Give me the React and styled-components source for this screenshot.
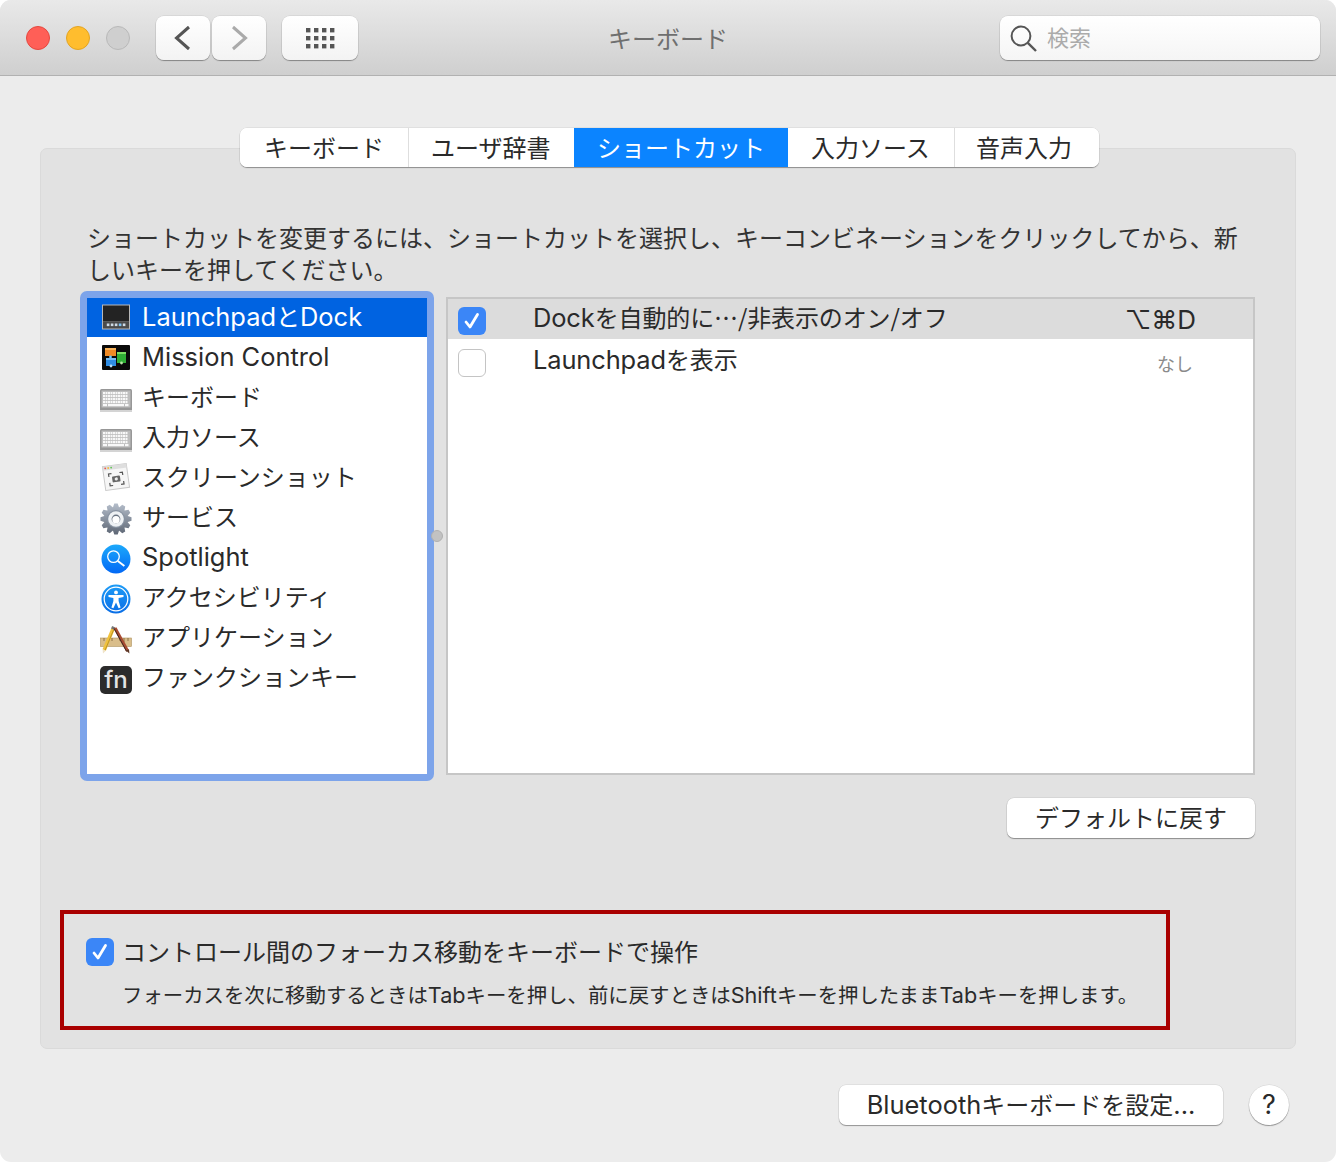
import React from "react";
import styled, { createGlobalStyle } from "styled-components";

const GlobalStyle = createGlobalStyle`
  html, body {
    margin: 0;
    padding: 0;
    background: #fff;
  }
  * {
    box-sizing: border-box;
  }
`;

const fontStack = `"Noto Sans CJK JP", "Noto Sans", sans-serif`;
const softShadow = `0 1px 1px rgba(0, 0, 0, 0.34), 0 0 0 0.5px rgba(0, 0, 0, 0.1)`;

const Window = styled.div`
  width: 1336px;
  height: 1162px;
  background: #ececec;
  border-radius: 11px;
  overflow: hidden;
  font-family: ${fontStack};
  color: #2a2a2a;
`;

const Latin = styled.span`
  font-family: Inter, "Liberation Sans", sans-serif;
  font-size: 1.06em;
`;

const Toolbar = styled.div`
  height: 76px;
  display: grid;
  grid-template-columns: 1fr auto 1fr;
  align-items: center;
  padding: 0 16px;
  background: linear-gradient(to bottom, #e9e9e9, #cfcfcf);
  border-bottom: 1px solid #b1b1b1;
`;

const ToolbarLeft = styled.div`
  display: flex;
  align-items: center;
  padding-left: 10px;
`;

const TrafficLights = styled.div`
  display: flex;
  gap: 16px;
  margin-right: 26px;
`;

const Light = styled.span`
  width: 24px;
  height: 24px;
  border-radius: 50%;
  background: ${(p) => p.$color};
  border: 1px solid ${(p) => p.$edge};
`;

const ToolButton = styled.button`
  height: 44px;
  width: ${(p) => p.$width}px;
  margin-right: ${(p) => p.$gap}px;
  padding: 0;
  display: flex;
  align-items: center;
  justify-content: center;
  border: none;
  border-radius: 8px;
  background: linear-gradient(to bottom, #ffffff, #f3f3f3);
  box-shadow: ${softShadow};
`;

const WindowTitle = styled.div`
  font-size: 24px;
  line-height: 32px;
  color: #6f6f6f;
`;

const SearchBox = styled.div`
  justify-self: end;
  width: 320px;
  height: 44px;
  display: flex;
  align-items: center;
  gap: 9px;
  padding: 0 0 3px 10px;
  border-radius: 8px;
  background: linear-gradient(to bottom, #ffffff, #f5f5f5);
  box-shadow: ${softShadow};
  color: #ababab;
  font-size: 22px;
  line-height: 30px;
`;

const SearchGlyph = styled.span`
  display: flex;
  padding-top: 5px;
`;

const Content = styled.div`
  padding: 72px 40px 0;
`;

const Panel = styled.div`
  height: 901px;
  padding: 0 40px;
  background: #e2e2e2;
  border: 1px solid #dadada;
  border-radius: 7px;
`;

const Tabs = styled.div`
  width: 859px;
  height: 39px;
  margin: -21px 0 0 159px;
  display: flex;
  background: #fff;
  border-radius: 7px;
  overflow: hidden;
  box-shadow: ${softShadow};
`;

const Tab = styled.div`
  width: ${(p) => p.$width}px;
  padding-left: ${(p) => p.$pad}px;
  font-size: 24px;
  line-height: 38px;
  white-space: nowrap;
  color: ${(p) => (p.$active ? "#fff" : "#2a2a2a")};
  background: ${(p) => (p.$active ? "#0b84ff" : "#fff")};
  border-right: 1px solid ${(p) => (p.$divider ? "#dedede" : "transparent")};
`;

const Instructions = styled.p`
  margin: 54px 0 6px 6px;
  width: 1160px;
  font-size: 24px;
  line-height: 32px;
  color: #333;
`;

const Split = styled.div`
  display: flex;
  height: 490px;
  margin-left: -1px;
`;

const ListFrame = styled.div`
  width: 354px;
  height: 100%;
  border: 7px solid #7da4ea;
  border-radius: 7px;
  background: #fff;
`;

const ListRow = styled.div`
  height: ${(p) => (p.$selected ? "39px" : "40px")};
  margin-bottom: ${(p) => (p.$selected ? "1px" : "0")};
  display: flex;
  align-items: center;
  padding-left: 13px;
  gap: 10px;
  background: ${(p) => (p.$selected ? "#0063e1" : "transparent")};
  color: ${(p) => (p.$selected ? "#fff" : "#2a2a2a")};
  font-size: 24px;
  line-height: 32px;
  padding-bottom: ${(p) => (p.$selected ? "3px" : "4px")};
`;

const IconSlot = styled.span`
  width: 32px;
  height: 32px;
  padding-top: 2px;
  flex: none;
  display: flex;
  align-items: center;
  justify-content: center;
`;

const FnKey = styled.span`
  width: 32px;
  height: 28px;
  margin-top: 5px;
  border-radius: 5px;
  background: #2b2b2b;
  color: #e4e4e4;
  font-family: Inter, sans-serif;
  font-size: 24px;
  font-weight: 500;
  line-height: 27px;
  text-align: center;
`;

const Divider = styled.div`
  width: 12px;
  flex: none;
  display: flex;
  align-items: center;
`;

const DividerDot = styled.span`
  width: 12px;
  height: 12px;
  margin-left: -3px;
  flex: none;
  border-radius: 50%;
  background: #c2c2c2;
  border: 1px solid #b0b0b0;
`;

const Table = styled.div`
  flex: 1;
  margin: 6px 0;
  background: #fff;
  border: 2px solid #c6c6c6;
`;

const TableRow = styled.div`
  height: ${(p) => (p.$selected ? "40px" : "42px")};
  display: flex;
  align-items: flex-start;
  padding: ${(p) => (p.$selected ? "8px" : "10px")} 57px 0 10px;
  background: ${(p) => (p.$selected ? "#dcdcdc" : "#fff")};
`;

const CheckBox = styled.span`
  width: 28px;
  height: 28px;
  flex: none;
  display: flex;
  align-items: center;
  justify-content: center;
  border-radius: 6px;
  background: ${(p) => (p.$checked ? "#3b86f7" : "#fff")};
  border: ${(p) => (p.$checked ? "none" : "1px solid #c4c4c4")};
`;

const RowLabel = styled.span`
  margin: -6px 0 0 47px;
  font-size: 24px;
  line-height: 32px;
  letter-spacing: -0.12px;
  color: #2a2a2a;
`;

const KeyCombo = styled.span`
  margin: -3px 0 0 auto;
  font-family: Inter, "DejaVu Sans", sans-serif;
  font-size: 26px;
  line-height: 32px;
  color: #2a2a2a;
`;

const NoKey = styled.span`
  margin: 2px 3px 0 auto;
  font-size: 18px;
  line-height: 24px;
  color: #8a8a8a;
`;

const ButtonRow = styled.div`
  display: flex;
  justify-content: flex-end;
  margin-top: 17px;
`;

const PushButton = styled.button`
  height: 40px;
  width: ${(p) => p.$width}px;
  padding: 0 0 2px;
  border: none;
  border-radius: 7px;
  background: #fff;
  font-family: ${fontStack};
  font-size: 24px;
  line-height: 36px;
  color: #2a2a2a;
  box-shadow: ${softShadow};
`;

const FocusBox = styled.div`
  width: 1110px;
  height: 120px;
  margin: 72px 0 0 -21px;
  padding: 24px 0 0 22px;
  border: 4px solid #a90000;
`;

const FocusOption = styled.div`
  display: flex;
  align-items: center;
  gap: 8px;
  font-size: 24px;
  line-height: 28px;
  color: #2a2a2a;
`;

const FocusText = styled.span`
  margin-top: -2px;
`;

const FocusHint = styled.div`
  margin: 13px 0 0 36px;
  font-size: 20.4px;
  line-height: 30px;
  white-space: nowrap;
  color: #2a2a2a;
`;

const Footer = styled.div`
  display: flex;
  justify-content: flex-end;
  align-items: center;
  gap: 26px;
  margin-top: 36px;
  padding-right: 7px;
`;

const HelpButton = styled.button`
  width: 40px;
  height: 40px;
  padding: 0 0 2px;
  border: none;
  border-radius: 50%;
  background: #fff;
  font-family: Inter, sans-serif;
  font-size: 27px;
  color: #2a2a2a;
  box-shadow: ${softShadow};
`;

const Chevron = ({ d, color }) => (
  <svg width="20" height="28" viewBox="0 0 20 28">
    <polyline points={d} fill="none" stroke={color} strokeWidth="3" />
  </svg>
);

const GridIcon = () => (
  <svg width="30" height="22" viewBox="0 0 30 22">
    {[0, 8, 16].map((y) =>
      [0, 8, 16, 24].map((x) => (
        <rect key={`${x}-${y}`} x={x + 1} y={y + 1} width="4.4" height="4.4" fill="#555" />
      ))
    )}
  </svg>
);

const SearchIcon = () => (
  <svg width="28" height="28" viewBox="0 0 28 28">
    <circle cx="11" cy="11" r="9.4" fill="none" stroke="#555" strokeWidth="2" />
    <line x1="17.8" y1="17.8" x2="26" y2="26" stroke="#555" strokeWidth="2.4" />
  </svg>
);

const CheckMark = () => (
  <svg width="20" height="20" viewBox="0 0 20 20">
    <polyline points="4,11 8,16 15.5,3.5" fill="none" stroke="#fff" strokeWidth="2.8" strokeLinecap="round" strokeLinejoin="round" />
  </svg>
);

const DockIcon = () => (
  <svg width="30" height="26" viewBox="0 0 30 26">
    <rect x="1" y="0.5" width="28" height="25" fill="#b8b8b8" />
    <rect x="2" y="1.5" width="26" height="16" fill="#232323" />
    <rect x="2" y="17.5" width="26" height="7" fill="#4b4b4b" />
    {[7, 11, 15, 19, 23].map((x) => (
      <rect key={x} x={x - 1.2} y="19.5" width="2.6" height="2.6" fill={x === 19 ? "#7fc4f5" : "#cfdbe6"} />
    ))}
  </svg>
);

const MissionIcon = () => (
  <svg width="28" height="25" viewBox="0 0 28 25">
    <rect width="28" height="25" rx="1" fill="#0a0a0a" />
    <rect x="3" y="3" width="11" height="8" fill="#f08a24" />
    <rect x="3" y="3" width="11" height="2" fill="#f9b45c" />
    <rect x="4" y="13" width="10" height="8" fill="#2f8de4" />
    <rect x="4" y="13" width="10" height="2" fill="#78bdf3" />
    <rect x="15" y="7" width="9" height="11" fill="#2fae35" />
    <rect x="15" y="7" width="9" height="2" fill="#7ddc63" />
    <circle cx="8.5" cy="12" r="1.4" fill="#6fc4f5" />
    <circle cx="19.5" cy="18" r="1.4" fill="#b7e8a5" />
    <circle cx="9" cy="21" r="1.4" fill="#b5ddf7" />
  </svg>
);

const KEY_COLUMNS = [3, 5.5, 8, 10.5, 13, 15.5, 18, 20.5, 23, 25.5];

const KeyboardIcon = () => (
  <svg width="32" height="24" viewBox="0 0 32 24" style={{ marginTop: 7 }}>
    <rect x="0" y="0" width="32" height="22" rx="1.5" fill="#979797" />
    <rect x="0" y="21" width="32" height="2" fill="#d4d4d4" />
    <rect x="1.5" y="1.5" width="29" height="17" fill="#bdbdbd" />
    {[3, 6, 9, 12].map((y) =>
      KEY_COLUMNS.map((x) => <rect key={`${x}-${y}`} x={x} y={y} width="2" height="2.2" fill="#f8f8f8" />)
    )}
    <rect x="8" y="15" width="16" height="2.2" fill="#f8f8f8" />
    <rect x="3" y="15" width="4" height="2.2" fill="#f8f8f8" />
    <rect x="25" y="15" width="3.5" height="2.2" fill="#f8f8f8" />
  </svg>
);

const ScreenshotIcon = () => (
  <svg width="30" height="30" viewBox="0 0 30 30">
    <g transform="rotate(-8 15 15)">
      <rect x="3" y="3" width="24" height="24" fill="#f6f6f6" stroke="#c9c9c9" />
      <rect x="3" y="3" width="24" height="4" fill="#dedede" />
      <circle cx="5.5" cy="5" r="0.9" fill="#e8594f" />
      <circle cx="8.5" cy="5" r="0.9" fill="#f3bb3b" />
      <circle cx="11.5" cy="5" r="0.9" fill="#5fc454" />
      <path d="M8 14v-3h3M19 11h3v3M22 20v3h-3M11 23H8v-3" fill="none" stroke="#555" strokeWidth="1.2" />
      <rect x="11" y="14" width="8" height="6" rx="1" fill="#666" />
      <circle cx="15" cy="17" r="1.6" fill="#eee" />
    </g>
  </svg>
);

const gearPath = () => {
  const teeth = 12;
  const pts = [];
  for (let i = 0; i < teeth; i++) {
    const a = (i / teeth) * Math.PI * 2;
    const w = Math.PI / teeth;
    [
      [12.2, a - w * 0.95],
      [15.6, a - w * 0.42],
      [15.6, a + w * 0.42],
      [12.2, a + w * 0.95],
    ].forEach(([r, t]) => pts.push(`${(16 + r * Math.cos(t)).toFixed(2)},${(16 + r * Math.sin(t)).toFixed(2)}`));
  }
  return pts.join(" ");
};

const GearIcon = () => (
  <svg width="32" height="32" viewBox="0 0 32 32" style={{ marginTop: 3 }}>
    <defs>
      <linearGradient id="gearFill" x1="0" y1="0" x2="0" y2="1">
        <stop offset="0" stopColor="#b4bdca" />
        <stop offset="1" stopColor="#5e6775" />
      </linearGradient>
    </defs>
    <polygon points={gearPath()} fill="url(#gearFill)" />
    <circle cx="16" cy="16" r="9" fill="#8792a1" />
    <circle cx="16" cy="16" r="7.8" fill="#eef1f4" />
    <circle cx="16" cy="16" r="4.4" fill="#6a7482" />
    <circle cx="16" cy="16.8" r="3.7" fill="#fff" />
  </svg>
);

const SpotlightIcon = () => (
  <svg width="30" height="30" viewBox="0 0 30 30" style={{ marginTop: 3 }}>
    <defs>
      <linearGradient id="spotFill" x1="0" y1="0" x2="0" y2="1">
        <stop offset="0" stopColor="#1ca9fb" />
        <stop offset="1" stopColor="#0268f5" />
      </linearGradient>
    </defs>
    <circle cx="15" cy="15" r="14.5" fill="url(#spotFill)" />
    <circle cx="12.5" cy="12.6" r="5.8" fill="none" stroke="#fff" strokeWidth="1.3" />
    <line x1="16.8" y1="17" x2="23.4" y2="22" stroke="#fff" strokeWidth="1.9" />
  </svg>
);

const AccessIcon = () => (
  <svg width="30" height="30" viewBox="0 0 30 30" style={{ marginTop: 3 }}>
    <defs>
      <linearGradient id="accFill" x1="0" y1="0" x2="0" y2="1">
        <stop offset="0" stopColor="#1d9bf6" />
        <stop offset="1" stopColor="#0a6ee6" />
      </linearGradient>
    </defs>
    <circle cx="15" cy="15" r="14.5" fill="url(#accFill)" />
    <circle cx="15" cy="15" r="11.8" fill="none" stroke="#fff" strokeWidth="1.2" />
    <circle cx="15" cy="8.4" r="1.9" fill="#fff" />
    <path d="M7.5 11 L22.5 11 L22.5 13 L17.6 14 L17.6 17 L19.6 23.6 L17.6 24.2 L15 18.4 L12.4 24.2 L10.4 23.6 L12.4 17 L12.4 14 L7.5 13 Z" fill="#fff" />
  </svg>
);

const AppIcon = () => (
  <svg width="32" height="28" viewBox="0 0 32 28" style={{ marginTop: 6 }}>
    <rect x="0.5" y="12" width="31" height="8.5" fill="#d9bd8a" stroke="#b0935f" strokeWidth="0.6" />
    <path d="M4 12v3M8 12v4M12 12v3M20 12v3M24 12v4M28 12v3" stroke="#7b6135" strokeWidth="0.8" />
    <line x1="13" y1="3" x2="4.2" y2="24" stroke="#f0c23d" strokeWidth="3.6" />
    <line x1="13.8" y1="3.4" x2="5" y2="24.4" stroke="#b08820" strokeWidth="0.8" />
    <polygon points="2.6,23.4 5.8,24.8 3,27.6" fill="#efe3c8" />
    <rect x="11.4" y="0.5" width="3.6" height="2.8" fill="#777" transform="rotate(23 13 2)" />
    <line x1="15" y1="2" x2="27.6" y2="25" stroke="#a84a30" strokeWidth="3.2" />
    <line x1="14.2" y1="2.6" x2="26.6" y2="25.4" stroke="#3e2a22" strokeWidth="1" />
    <polygon points="26,24.5 29,23.2 29.4,27.6" fill="#5a3524" />
  </svg>
);

const ICONS = {
  dock: <DockIcon />,
  mission: <MissionIcon />,
  keyboard: <KeyboardIcon />,
  screenshot: <ScreenshotIcon />,
  gear: <GearIcon />,
  spot: <SpotlightIcon />,
  access: <AccessIcon />,
  app: <AppIcon />,
  fn: <FnKey>fn</FnKey>,
};

const CATEGORIES = [
  {
    key: "dock",
    label: (
      <>
        <Latin>Launchpad</Latin>と<Latin>Dock</Latin>
      </>
    ),
    selected: true,
  },
  { key: "mission", label: <Latin>Mission Control</Latin> },
  { key: "keyboard", label: "キーボード" },
  { key: "keyboard", label: "入力ソース" },
  { key: "screenshot", label: "スクリーンショット" },
  { key: "gear", label: "サービス" },
  { key: "spot", label: <Latin>Spotlight</Latin> },
  { key: "access", label: "アクセシビリティ" },
  { key: "app", label: "アプリケーション" },
  { key: "fn", label: "ファンクションキー" },
];

const TABS = [
  { label: "キーボード", width: 169, pad: 24 },
  { label: "ユーザ辞書", width: 165, pad: 22 },
  { label: "ショートカット", width: 214, pad: 23, active: true },
  { label: "入力ソース", width: 167, pad: 23 },
  { label: "音声入力", width: 144, pad: 21 },
];

export default function App() {
  return (
    <>
      <GlobalStyle />
      <Window>
        <Toolbar>
          <ToolbarLeft>
            <TrafficLights>
              <Light $color="#ff5f57" $edge="#e5483f" />
              <Light $color="#ffbd2e" $edge="#e3a423" />
              <Light $color="#cfcfcf" $edge="#b9b9b9" />
            </TrafficLights>
            <ToolButton $width={54} $gap={2}>
              <Chevron d="16,3 3.5,14 16,25" color="#555" />
            </ToolButton>
            <ToolButton $width={54} $gap={16}>
              <Chevron d="4,3 16.5,14 4,25" color="#aaa" />
            </ToolButton>
            <ToolButton $width={76} $gap={0}>
              <GridIcon />
            </ToolButton>
          </ToolbarLeft>
          <WindowTitle>キーボード</WindowTitle>
          <SearchBox>
            <SearchGlyph>
              <SearchIcon />
            </SearchGlyph>
            検索
          </SearchBox>
        </Toolbar>
        <Content>
          <Panel>
            <Tabs>
              {TABS.map((tab, i) => (
                <Tab key={tab.label} $width={tab.width} $pad={tab.pad} $active={tab.active} $divider={i === 0 || i === 3}>
                  {tab.label}
                </Tab>
              ))}
            </Tabs>
            <Instructions>
              ショートカットを変更するには、ショートカットを選択し、キーコンビネーションをクリックしてから、新しいキーを押してください。
            </Instructions>
            <Split>
              <ListFrame>
                {CATEGORIES.map((item, i) => (
                  <ListRow key={i} $selected={item.selected}>
                    <IconSlot>{ICONS[item.key]}</IconSlot>
                    <span>{item.label}</span>
                  </ListRow>
                ))}
              </ListFrame>
              <Divider>
                <DividerDot />
              </Divider>
              <Table>
                <TableRow $selected>
                  <CheckBox $checked>
                    <CheckMark />
                  </CheckBox>
                  <RowLabel>
                    <Latin>Dock</Latin>を自動的に…/非表示のオン/オフ
                  </RowLabel>
                  <KeyCombo>⌥⌘D</KeyCombo>
                </TableRow>
                <TableRow>
                  <CheckBox />
                  <RowLabel>
                    <Latin>Launchpad</Latin>を表示
                  </RowLabel>
                  <NoKey>なし</NoKey>
                </TableRow>
              </Table>
            </Split>
            <ButtonRow>
              <PushButton $width={248}>デフォルトに戻す</PushButton>
            </ButtonRow>
            <FocusBox>
              <FocusOption>
                <CheckBox $checked>
                  <CheckMark />
                </CheckBox>
                <FocusText>コントロール間のフォーカス移動をキーボードで操作</FocusText>
              </FocusOption>
              <FocusHint>
                フォーカスを次に移動するときは<Latin>Tab</Latin>キーを押し、前に戻すときは<Latin>Shift</Latin>キーを押したまま<Latin>Tab</Latin>キーを押します。
              </FocusHint>
            </FocusBox>
          </Panel>
          <Footer>
            <PushButton $width={384}>
              <Latin>Bluetooth</Latin>キーボードを設定<Latin>...</Latin>
            </PushButton>
            <HelpButton>?</HelpButton>
          </Footer>
        </Content>
      </Window>
    </>
  );
}
